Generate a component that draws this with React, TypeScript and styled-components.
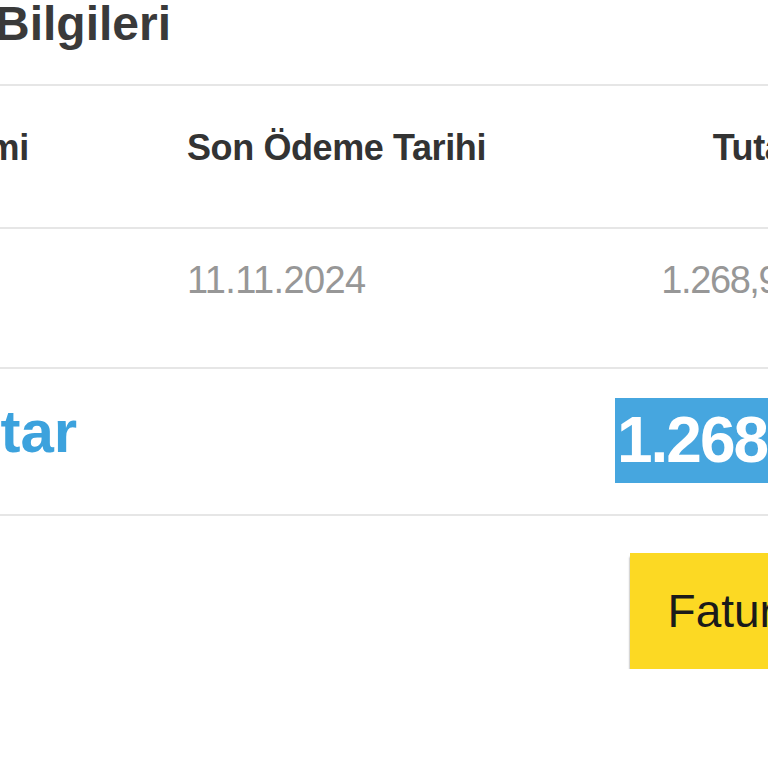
import React from "react"
import styled, { createGlobalStyle } from "styled-components"

const GlobalStyle = createGlobalStyle`
  html, body {
    margin: 0;
    padding: 0;
    background: #ffffff;
    overflow: hidden;
  }
  body {
    font-family: "Liberation Sans", Arial, sans-serif;
  }
`

const lineColor = "#e6e6e6"

const Page = styled.div`
  width: 1278px;
  margin-left: -304px;
`

const Title = styled.h2`
  margin: 0;
  padding: 0 0 36px 139px;
  font-size: 48px;
  line-height: 48px;
  font-weight: 700;
  color: #3a3a3a;
  border-bottom: 2px solid ${lineColor};
`

const Row = styled.div<{ $pt: number; $pb: number }>`
  display: grid;
  grid-template-columns: 491px 1fr auto;
  padding: ${({ $pt }) => $pt}px 176px ${({ $pb }) => $pb}px 0;
  border-bottom: 2px solid ${lineColor};
`

const HeadCell = styled.div<{ $first?: boolean; $right?: boolean }>`
  font-size: 36px;
  line-height: 36px;
  font-weight: 700;
  color: #333333;
  letter-spacing: -0.4px;
  padding-left: ${({ $first }) => ($first ? "86px" : "0")};
  text-align: ${({ $right }) => ($right ? "right" : "left")};
  white-space: nowrap;
`

const DataCell = styled.div<{ $first?: boolean }>`
  font-size: 38px;
  line-height: 38px;
  color: #979797;
  letter-spacing: -0.6px;
  padding-left: ${({ $first }) => ($first ? "86px" : "0")};
  white-space: nowrap;
`

const AmountCell = styled(DataCell)`
  text-align: right;
  letter-spacing: -1.4px;
`

const TotalRow = styled.div`
  display: flex;
  justify-content: space-between;
  align-items: flex-start;
  padding: 29px 32px 31px 10px;
  border-bottom: 2px solid ${lineColor};
`

const TotalLabel = styled.div`
  margin-top: 4px;
  font-size: 60px;
  line-height: 60px;
  font-weight: 700;
  color: #3ca2dd;
  white-space: nowrap;
`

const TotalAmount = styled.div`
  height: 85px;
  padding: 0 2px;
  background: #46a6df;
  color: #ffffff;
  font-size: 64px;
  line-height: 85px;
  font-weight: 700;
  letter-spacing: -2px;
  white-space: nowrap;
`

const Actions = styled.div`
  display: flex;
  justify-content: flex-end;
  padding-top: 37px;
`

const PayButton = styled.button`
  height: 116px;
  padding: 0 38px;
  border: none;
  border-radius: 0;
  background: #fcd923;
  box-shadow: 0 4px 2px rgba(0, 0, 0, 0.5);
  font-family: "Liberation Sans", Arial, sans-serif;
  font-size: 46px;
  color: #1a1a1a;
  white-space: nowrap;
  cursor: pointer;
`

export default function App() {
  return (
    <>
      <GlobalStyle />
      <Page>
        <Title>Fatura Bilgileri</Title>
        <Row $pt={44} $pb={61}>
          <HeadCell $first>Fatura Dönemi</HeadCell>
          <HeadCell>Son Ödeme Tarihi</HeadCell>
          <HeadCell $right>Tutar</HeadCell>
        </Row>
        <Row $pt={32} $pb={68}>
          <DataCell $first></DataCell>
          <DataCell>11.11.2024</DataCell>
          <AmountCell>1.268,95</AmountCell>
        </Row>
        <TotalRow>
          <TotalLabel>Toplam Tutar</TotalLabel>
          <TotalAmount>1.268,95 TL</TotalAmount>
        </TotalRow>
        <Actions>
          <PayButton>Faturayı Öde</PayButton>
        </Actions>
      </Page>
    </>
  )
}
